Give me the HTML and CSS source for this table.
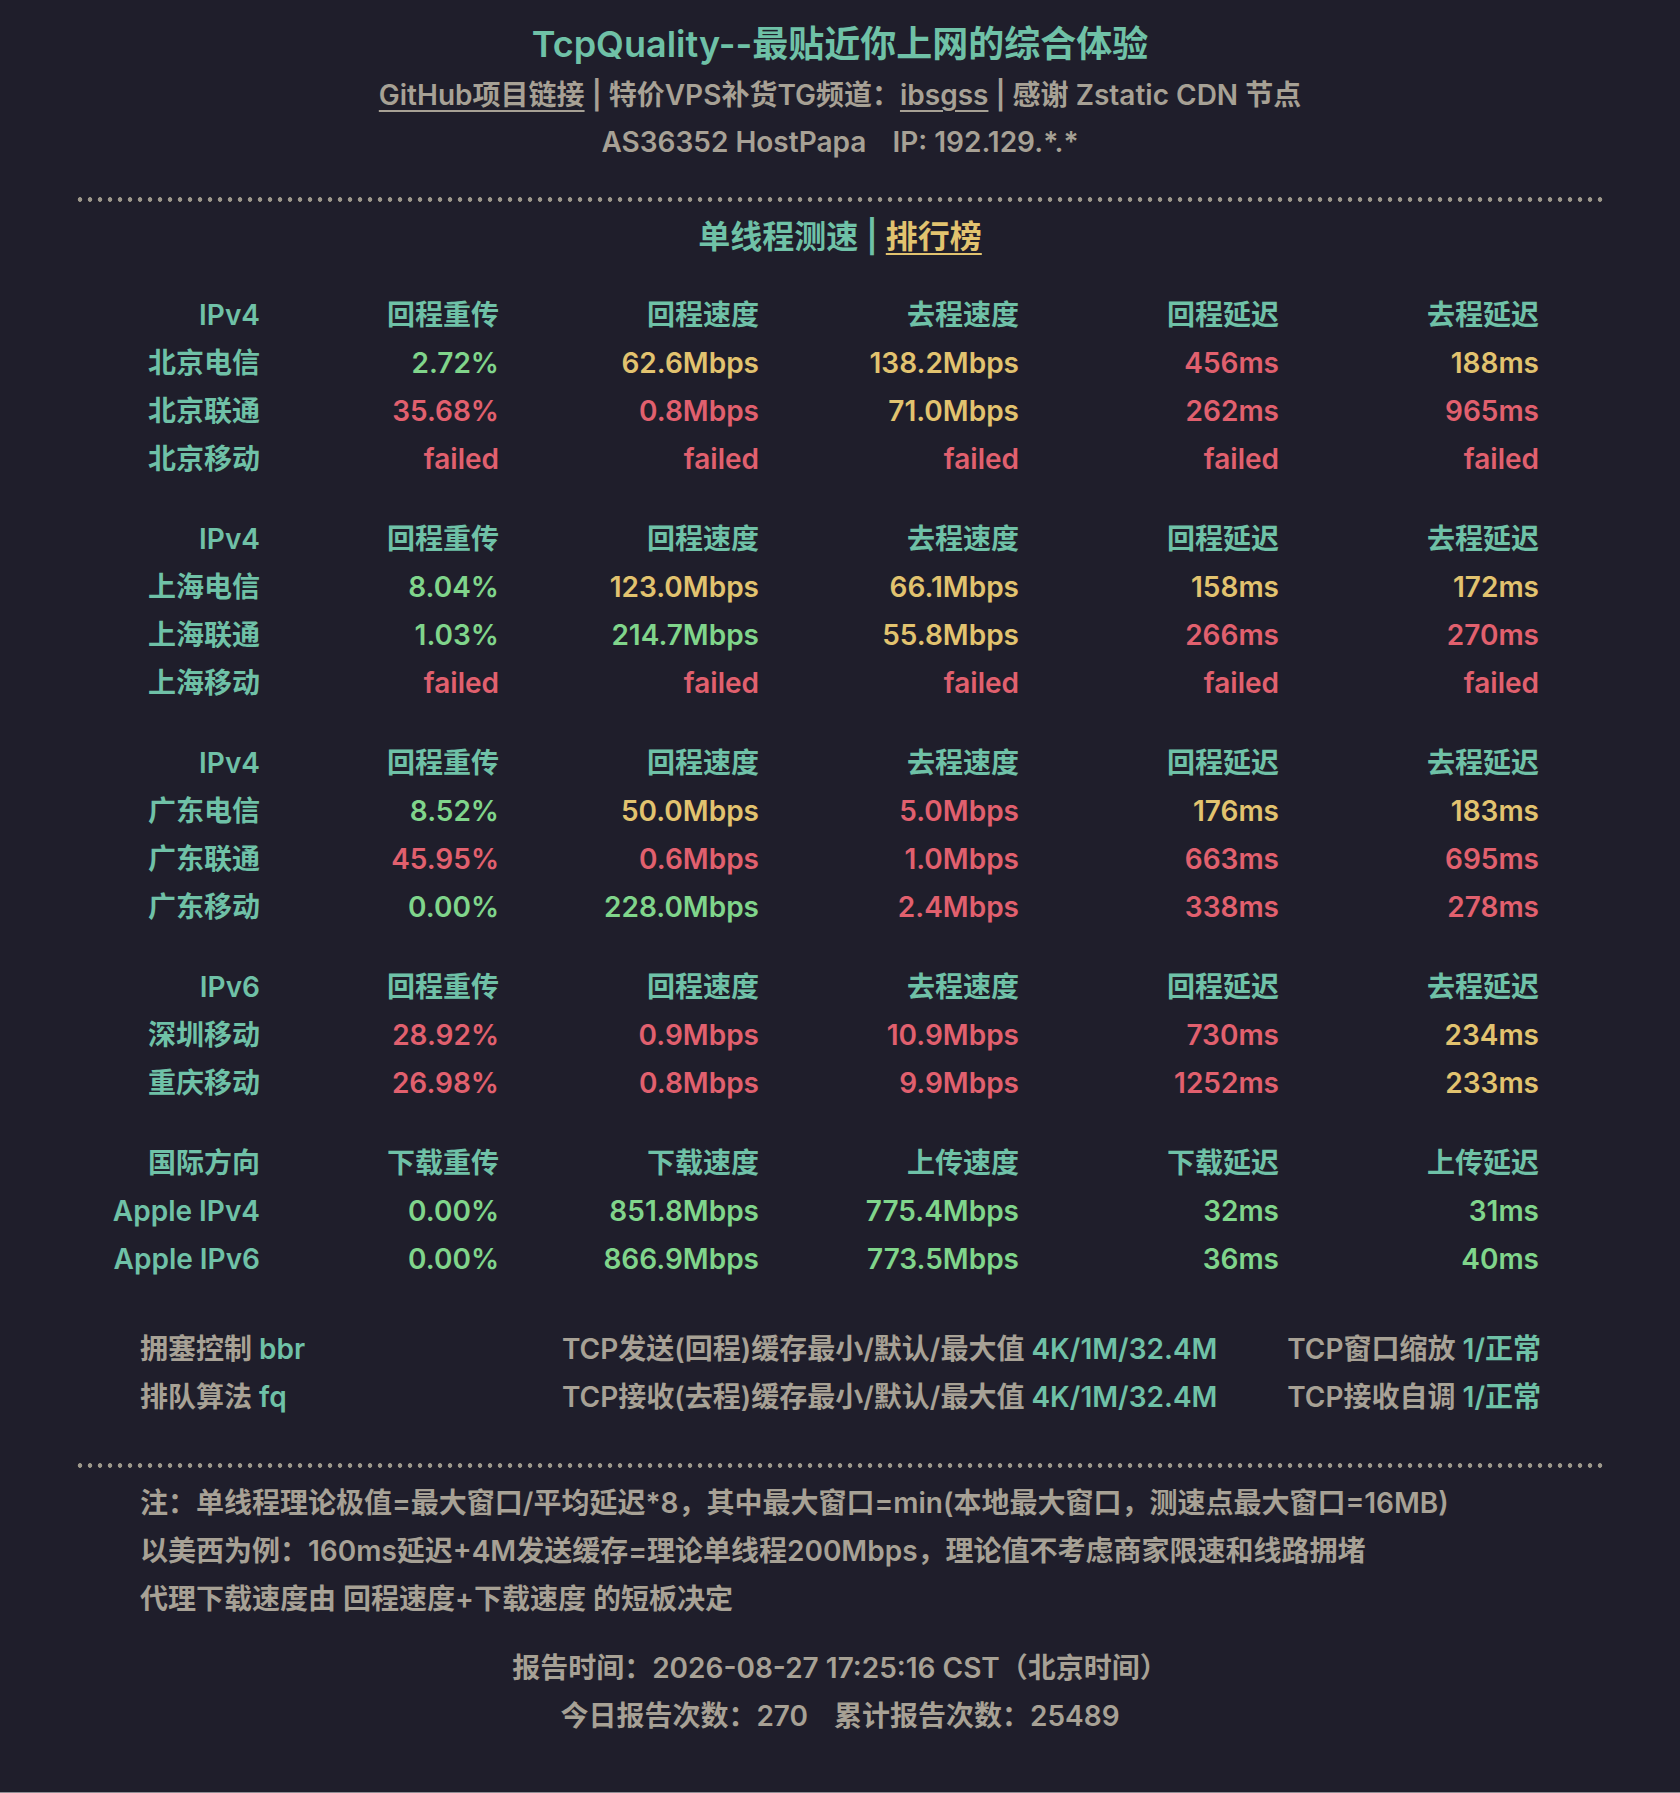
FILE: index.html
```html
<!DOCTYPE html>
<html lang="zh-CN">
<head>
<meta charset="utf-8">
<title>TcpQuality</title>
<link rel="stylesheet" href="styles.css">
</head>
<body>
<div class="page">
  <header class="head">
    <h1 class="title">TcpQuality--最贴近你上网的综合体验</h1>
    <p class="sub"><a class="link">GitHub项目链接</a> <span class="sep">|</span> 特价VPS补货TG频道：<a class="link">ibsgss</a> <span class="sep">|</span> 感谢 Zstatic CDN 节点</p>
    <p class="sub asline">AS36352 HostPapa<span class="ip">IP: 192.129.*.*</span></p>
  </header>

  <div class="dots"></div>

  <h2 class="section">单线程测速 <span class="bar">|</span> <a class="rank">排行榜</a></h2>

  <div class="results">
    <div class="group">
      <div class="c hd">IPv4</div><div class="c hd">回程重传</div><div class="c hd">回程速度</div><div class="c hd">去程速度</div><div class="c hd">回程延迟</div><div class="c hd">去程延迟</div>
      <div class="c hd">北京电信</div><div class="c g">2.72%</div><div class="c y">62.6Mbps</div><div class="c y">138.2Mbps</div><div class="c r">456ms</div><div class="c y">188ms</div>
      <div class="c hd">北京联通</div><div class="c r">35.68%</div><div class="c r">0.8Mbps</div><div class="c y">71.0Mbps</div><div class="c r">262ms</div><div class="c r">965ms</div>
      <div class="c hd">北京移动</div><div class="c r">failed</div><div class="c r">failed</div><div class="c r">failed</div><div class="c r">failed</div><div class="c r">failed</div>
    </div>
    <div class="group">
      <div class="c hd">IPv4</div><div class="c hd">回程重传</div><div class="c hd">回程速度</div><div class="c hd">去程速度</div><div class="c hd">回程延迟</div><div class="c hd">去程延迟</div>
      <div class="c hd">上海电信</div><div class="c g">8.04%</div><div class="c y">123.0Mbps</div><div class="c y">66.1Mbps</div><div class="c y">158ms</div><div class="c y">172ms</div>
      <div class="c hd">上海联通</div><div class="c g">1.03%</div><div class="c g">214.7Mbps</div><div class="c y">55.8Mbps</div><div class="c r">266ms</div><div class="c r">270ms</div>
      <div class="c hd">上海移动</div><div class="c r">failed</div><div class="c r">failed</div><div class="c r">failed</div><div class="c r">failed</div><div class="c r">failed</div>
    </div>
    <div class="group">
      <div class="c hd">IPv4</div><div class="c hd">回程重传</div><div class="c hd">回程速度</div><div class="c hd">去程速度</div><div class="c hd">回程延迟</div><div class="c hd">去程延迟</div>
      <div class="c hd">广东电信</div><div class="c g">8.52%</div><div class="c y">50.0Mbps</div><div class="c r">5.0Mbps</div><div class="c y">176ms</div><div class="c y">183ms</div>
      <div class="c hd">广东联通</div><div class="c r">45.95%</div><div class="c r">0.6Mbps</div><div class="c r">1.0Mbps</div><div class="c r">663ms</div><div class="c r">695ms</div>
      <div class="c hd">广东移动</div><div class="c g">0.00%</div><div class="c g">228.0Mbps</div><div class="c r">2.4Mbps</div><div class="c r">338ms</div><div class="c r">278ms</div>
    </div>
    <div class="group">
      <div class="c hd">IPv6</div><div class="c hd">回程重传</div><div class="c hd">回程速度</div><div class="c hd">去程速度</div><div class="c hd">回程延迟</div><div class="c hd">去程延迟</div>
      <div class="c hd">深圳移动</div><div class="c r">28.92%</div><div class="c r">0.9Mbps</div><div class="c r">10.9Mbps</div><div class="c r">730ms</div><div class="c y">234ms</div>
      <div class="c hd">重庆移动</div><div class="c r">26.98%</div><div class="c r">0.8Mbps</div><div class="c r">9.9Mbps</div><div class="c r">1252ms</div><div class="c y">233ms</div>
    </div>
    <div class="group">
      <div class="c hd">国际方向</div><div class="c hd">下载重传</div><div class="c hd">下载速度</div><div class="c hd">上传速度</div><div class="c hd">下载延迟</div><div class="c hd">上传延迟</div>
      <div class="c hd">Apple IPv4</div><div class="c g">0.00%</div><div class="c g">851.8Mbps</div><div class="c g">775.4Mbps</div><div class="c g">32ms</div><div class="c g">31ms</div>
      <div class="c hd">Apple IPv6</div><div class="c g">0.00%</div><div class="c g">866.9Mbps</div><div class="c g">773.5Mbps</div><div class="c g">36ms</div><div class="c g">40ms</div>
    </div>
  </div>

  <div class="settings">
    <div class="s1">拥塞控制 <span class="v">bbr</span></div>
    <div class="s2">TCP发送(回程)缓存最小/默认/最大值 <span class="v">4K/1M/32.4M</span></div>
    <div class="s3">TCP窗口缩放 <span class="v">1/正常</span></div>
    <div class="s1">排队算法 <span class="v">fq</span></div>
    <div class="s2">TCP接收(去程)缓存最小/默认/最大值 <span class="v">4K/1M/32.4M</span></div>
    <div class="s3">TCP接收自调 <span class="v">1/正常</span></div>
  </div>

  <div class="dots dots-bottom"></div>

  <div class="notes">
    <p>注：单线程理论极值=最大窗口/平均延迟*8，其中最大窗口=min(本地最大窗口，测速点最大窗口=16MB)</p>
    <p>以美西为例：160ms延迟+4M发送缓存=理论单线程200Mbps，理论值不考虑商家限速和线路拥堵</p>
    <p>代理下载速度由 回程速度+下载速度 的短板决定</p>
  </div>

  <div class="report">
    <p>报告时间：2026-08-27 17:25:16 CST（北京时间）</p>
    <p>今日报告次数：270<span class="gap">累计报告次数：25489</span></p>
  </div>
</div>
</body>
</html>
```

FILE: styles.css
```css
html, body {
  margin: 0;
  padding: 0;
  background: #1f1e2b;
}

body {
  font-family: "Inter", "Noto Sans CJK SC", sans-serif;
  font-weight: 600;
  font-size: 28px;
  color: #a7a195;
}

p, h1, h2 {
  margin: 0;
  font-weight: 600;
}

.page {
  min-height: 100vh;
  box-sizing: border-box;
  border-bottom: 1px solid #8f8e94;
}

.head {
  text-align: center;
  padding-top: 18px;
}

.title {
  font-size: 36px;
  line-height: 52px;
  color: #6fc1a7;
}

.sub {
  line-height: 50px;
  color: #a7a195;
}

.asline {
  line-height: 44px;
}

.ip {
  margin-left: 26px;
}

.link {
  color: #a7a195;
  text-decoration: underline;
  text-underline-offset: 5px;
  text-decoration-thickness: 2px;
}

.sep {
  color: #a7a195;
}

.dots {
  height: 5px;
  margin: 33px 75px 0;
  background-image: radial-gradient(circle at 5px 2.5px, #9d988b 2px, transparent 2.6px);
  background-size: 10px 5px;
  background-repeat: repeat-x;
}

.section {
  margin-top: 11px;
  text-align: center;
  font-size: 32px;
  line-height: 48px;
  color: #6fc1a7;
}

.bar {
  color: #6fc1a7;
}

.rank {
  color: #e2c36f;
  text-decoration: underline;
  text-underline-offset: 5px;
  text-decoration-thickness: 2px;
}

.results {
  margin-top: 30px;
  display: flex;
  flex-direction: column;
  gap: 32px;
}

.group {
  display: grid;
  grid-template-columns: 260px 239px repeat(4, 260px);
  margin-left: 21px;
}

.c {
  text-align: right;
  padding-right: 21px;
  line-height: 48px;
  white-space: nowrap;
}

.hd { color: #6fc1a7; }
.g { color: #80d58b; }
.y { color: #e2c36f; }
.r { color: #e1606e; }

.settings {
  margin: 42px 139px 0 140px;
  display: grid;
  grid-template-columns: 422px 1fr auto;
  line-height: 48px;
  color: #a7a195;
}

.s3 {
  text-align: right;
}

.v {
  color: #6fc1a7;
}

.dots-bottom {
  margin-top: 42px;
}

.notes {
  margin-top: 11px;
  padding-left: 140px;
  line-height: 48px;
}

.report {
  margin-top: 21px;
  text-align: center;
  line-height: 48px;
}

.gap {
  margin-left: 26px;
}
```
